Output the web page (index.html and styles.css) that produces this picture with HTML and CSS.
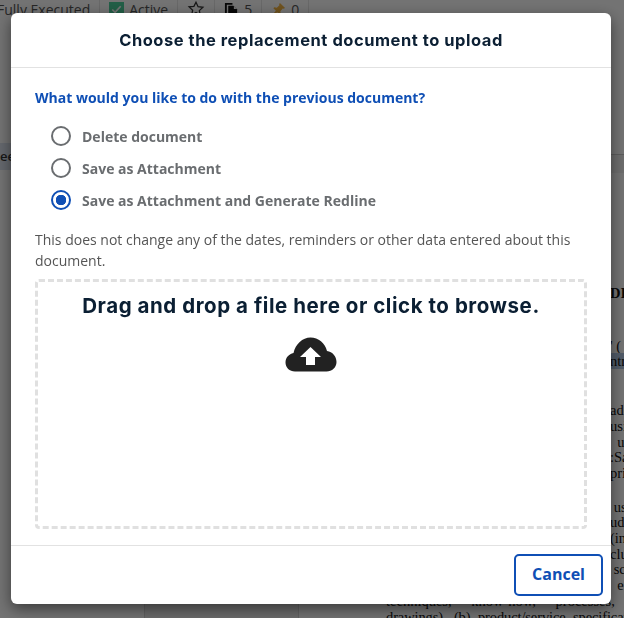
FILE: index.html
```html
<!DOCTYPE html>
<html lang="en">
<head>
    <meta charset="UTF-8">
    <meta name="viewport" content="width=device-width, initial-scale=1.0">
    <title>Choose the replacement document to upload</title>
    <link rel="stylesheet" href="styles.css">
</head>
<body>
    <div class="page">
        <div class="toolbar">
            <div class="tool-group tool-first">
                <span>Fully Executed</span>
            </div>
            <div class="tool-group">
                <span class="check-box">
                    <svg viewBox="0 0 16 16" width="15" height="15"><path d="M3.500 8l3 3L12.500 4.500" fill="none" stroke="#fff" stroke-width="1.800"/></svg>
                </span>
                <span>Active</span>
            </div>
            <div class="tool-group">
                <svg viewBox="0 0 20 20" width="18" height="18"><path d="M10 2.500l2.300 5 5.400.6-4 3.700 1.100 5.400L10 14l-4.800 2.700 1.100-5.400-4-3.700 5.400-.6z" fill="none" stroke="#333" stroke-width="1.400"/></svg>
            </div>
            <div class="tool-group">
                <svg viewBox="0 0 16 16" width="15" height="15"><path d="M1 1h8v2H3v10H1z" fill="#111"/><path d="M4.500 4H10l4 4v8H4.500z" fill="#111"/><path d="M10.500 4.500l3 3h-3z" fill="#fff"/></svg>
                <span>5</span>
            </div>
            <div class="tool-group">
                <svg viewBox="0 0 16 16" width="15" height="15"><path d="M9.500 1l5.500 5.500-1.500.8-1-.3-2.500 2.800.3 2.700-1 1-2.700-2.700L2 15l-1-1 4.200-4.600L2.500 6.700l1-1 2.700.3L9 3.500l-.3-1z" fill="#f5b642"/></svg>
                <span>0</span>
            </div>
        </div>
        <div class="main">
            <div class="left-pane">
                <div class="side-tab">ee</div>
            </div>
            <div class="mid-pane"></div>
            <div class="document">
                <div class="doc-band"></div>
                <p class="doc-line doc-head">DI</p>
                <p class="doc-line doc-gap-a">' (</p>
                <p class="doc-line"><span class="doc-mark">ntra</span></p>
                <p class="doc-line doc-gap-b">ade</p>
                <p class="doc-line">usi</p>
                <p class="doc-line">&nbsp;&nbsp;u</p>
                <p class="doc-line">:Sa</p>
                <p class="doc-line">pri</p>
                <p class="doc-line doc-gap-c">&nbsp;us</p>
                <p class="doc-line">ud</p>
                <p class="doc-line">(in</p>
                <p class="doc-line">clu</p>
                <p class="doc-line">&nbsp;sc</p>
                <p class="doc-line">&nbsp;&nbsp;e</p>
                <p class="doc-line doc-foot doc-spread">techniques, know-how, processes,</p>
                <p class="doc-line doc-foot doc-last">drawings), (b) product/service specificat</p>
            </div>
        </div>
    </div>

    <div class="overlay"></div>

    <div class="modal">
        <div class="modal-header">
            <h1>Choose the replacement document to upload</h1>
        </div>
        <div class="modal-body">
            <div class="question">What would you like to do with the previous document?</div>
            <div class="options">
                <label class="option">
                    <input type="radio" name="previous">
                    <span class="radio"></span>
                    Delete document
                </label>
                <label class="option">
                    <input type="radio" name="previous">
                    <span class="radio"></span>
                    Save as Attachment
                </label>
                <label class="option">
                    <input type="radio" name="previous" checked>
                    <span class="radio"></span>
                    Save as Attachment and Generate Redline
                </label>
            </div>
            <p class="note">This does not change any of the dates, reminders or other data entered about this document.</p>
            <div class="dropzone">
                <div class="dropzone-text">Drag and drop a file here or click to browse.</div>
                <svg class="cloud" viewBox="0 0 52 35" width="52" height="35">
                    <path d="M10 34.500C4.500 34.500 .5 30.500 .5 25.500.5 20.500 4 17 8.500 16 10.500 7 17.500 .5 25.500 .5c8 0 14.500 5.500 16.500 13.500C47.500 14.500 51.500 19.500 51.500 25c0 5.500-4.500 9.500-10 9.500z" fill="#222"/>
                    <path d="M25.500 10L36 20h-6v8h-9v-8h-6z" fill="#fff"/>
                </svg>
            </div>
        </div>
        <div class="modal-footer">
            <button class="btn-cancel">Cancel</button>
        </div>
    </div>
</body>
</html>
```

FILE: styles.css
```css
html, body {
    height: 100%;
}
body {
    margin: 0;
    overflow: hidden;
    font-family: 'Open Sans', 'Noto Sans', sans-serif;
    background-color: #fff;
    color: #333;
}
.page {
    height: 618px;
    overflow: hidden;
    background: #fff;
}
.toolbar {
    display: flex;
    align-items: center;
    height: 18px;
    margin-left: -3px;
    font-size: 14px;
    color: #555;
    white-space: nowrap;
}
.tool-group {
    display: flex;
    align-items: center;
    gap: 5px;
    height: 18px;
    padding: 0 9px 0 9px;
    border-right: 1px solid #e6e6e6;
}
.tool-first {
    padding-left: 0;
}
.check-box {
    display: flex;
    width: 15px;
    height: 15px;
    background-color: #4cd09c;
}
.main {
    display: flex;
}
.left-pane {
    box-sizing: border-box;
    width: 145px;
    height: 600px;
    padding-top: 125px;
    border-right: 1px solid #d8d8d8;
}
.side-tab {
    width: 40px;
    font-size: 13px;
    font-weight: 600;
    line-height: 27px;
    background-color: #dfe6f2;
}
.mid-pane {
    box-sizing: border-box;
    width: 154px;
    height: 600px;
    background-color: #eeeeee;
    border-right: 1px solid #d8d8d8;
}
.document {
    flex: 1;
    min-width: 0;
    padding-left: 87px;
    font-family: 'Liberation Serif', serif;
    font-size: 14.5px;
    line-height: 15.7px;
    color: #111;
    white-space: nowrap;
    overflow: hidden;
}
.doc-band {
    height: 18px;
    margin: 136px 0 0 -87px;
    background-color: #f2f2f2;
    border-top: 1px solid #cccccc;
}
.doc-line {
    margin: 0;
    padding-left: 224px;
}
.doc-head {
    margin-top: 113px;
    font-weight: bold;
}
.doc-gap-a {
    margin-top: 37px;
}
.doc-mark {
    background-color: #b5cbe8;
}
.doc-gap-b {
    margin-top: 33px;
}
.doc-gap-c {
    margin-top: 18px;
}
.doc-foot {
    padding-left: 0;
}
.doc-spread {
    word-spacing: 16px;
}
.doc-last {
    letter-spacing: -0.12px;
    word-spacing: 4px;
}
.overlay {
    position: fixed;
    top: 0;
    left: 0;
    right: 0;
    bottom: 0;
    background-color: rgba(0, 0, 0, 0.55);
}
.modal {
    position: fixed;
    top: 13px;
    left: 11px;
    width: 600px;
    height: 591px;
    display: flex;
    flex-direction: column;
    background-color: #fff;
    border-radius: 6px;
    box-shadow: 0 5px 15px rgba(0, 0, 0, 0.5);
}
.modal-header {
    height: 54px;
    display: flex;
    align-items: center;
    justify-content: center;
    border-bottom: 1px solid #e2e2e2;
}
h1 {
    margin: 0;
    font-family: 'Inter', sans-serif;
    font-size: 16.5px;
    font-weight: 700;
    letter-spacing: 0.53px;
    color: #0b1f33;
}
.modal-body {
    flex: 1;
    padding: 20px 24px 0;
    border-bottom: 1px solid #e2e2e2;
}
.question {
    font-size: 14px;
    font-weight: 700;
    line-height: 19px;
    color: #0f4fb5;
}
.options {
    display: flex;
    flex-direction: column;
    gap: 12px;
    margin-top: 19px;
    padding-left: 16px;
}
.option {
    display: flex;
    align-items: center;
    gap: 11px;
    height: 20px;
    font-size: 14px;
    font-weight: 700;
    color: #6a6d70;
}
.option input {
    display: none;
}
.radio {
    box-sizing: border-box;
    width: 20px;
    height: 20px;
    border: 2px solid #6a6d70;
    border-radius: 50%;
}
.option input:checked + .radio {
    border-color: #0f4fb5;
    background: radial-gradient(circle, #0f4fb5 0 5px, #fff 5.5px);
}
.note {
    margin: 19px 0 0;
    font-size: 14px;
    line-height: 21px;
    color: #555;
}
.dropzone {
    box-sizing: border-box;
    height: 250px;
    margin-top: 8px;
    padding-top: 12px;
    border: 3px dashed #e0e0e0;
    border-radius: 4px;
    text-align: center;
}
.dropzone-text {
    font-family: 'Inter', sans-serif;
    font-size: 20.5px;
    font-weight: 700;
    letter-spacing: 0.55px;
    line-height: 24px;
    color: #0b1f33;
}
.cloud {
    display: block;
    margin: 19px auto 0;
}
.modal-footer {
    display: flex;
    justify-content: flex-end;
    height: 58px;
    padding: 8px 8px 0 0;
    box-sizing: border-box;
}
.btn-cancel {
    width: 89px;
    height: 42px;
    padding: 0 0 2px;
    font-family: 'Open Sans', sans-serif;
    font-size: 16px;
    font-weight: 700;
    color: #0f4fb5;
    background-color: #fff;
    border: 2px solid #0f4fb5;
    border-radius: 5px;
}
```
